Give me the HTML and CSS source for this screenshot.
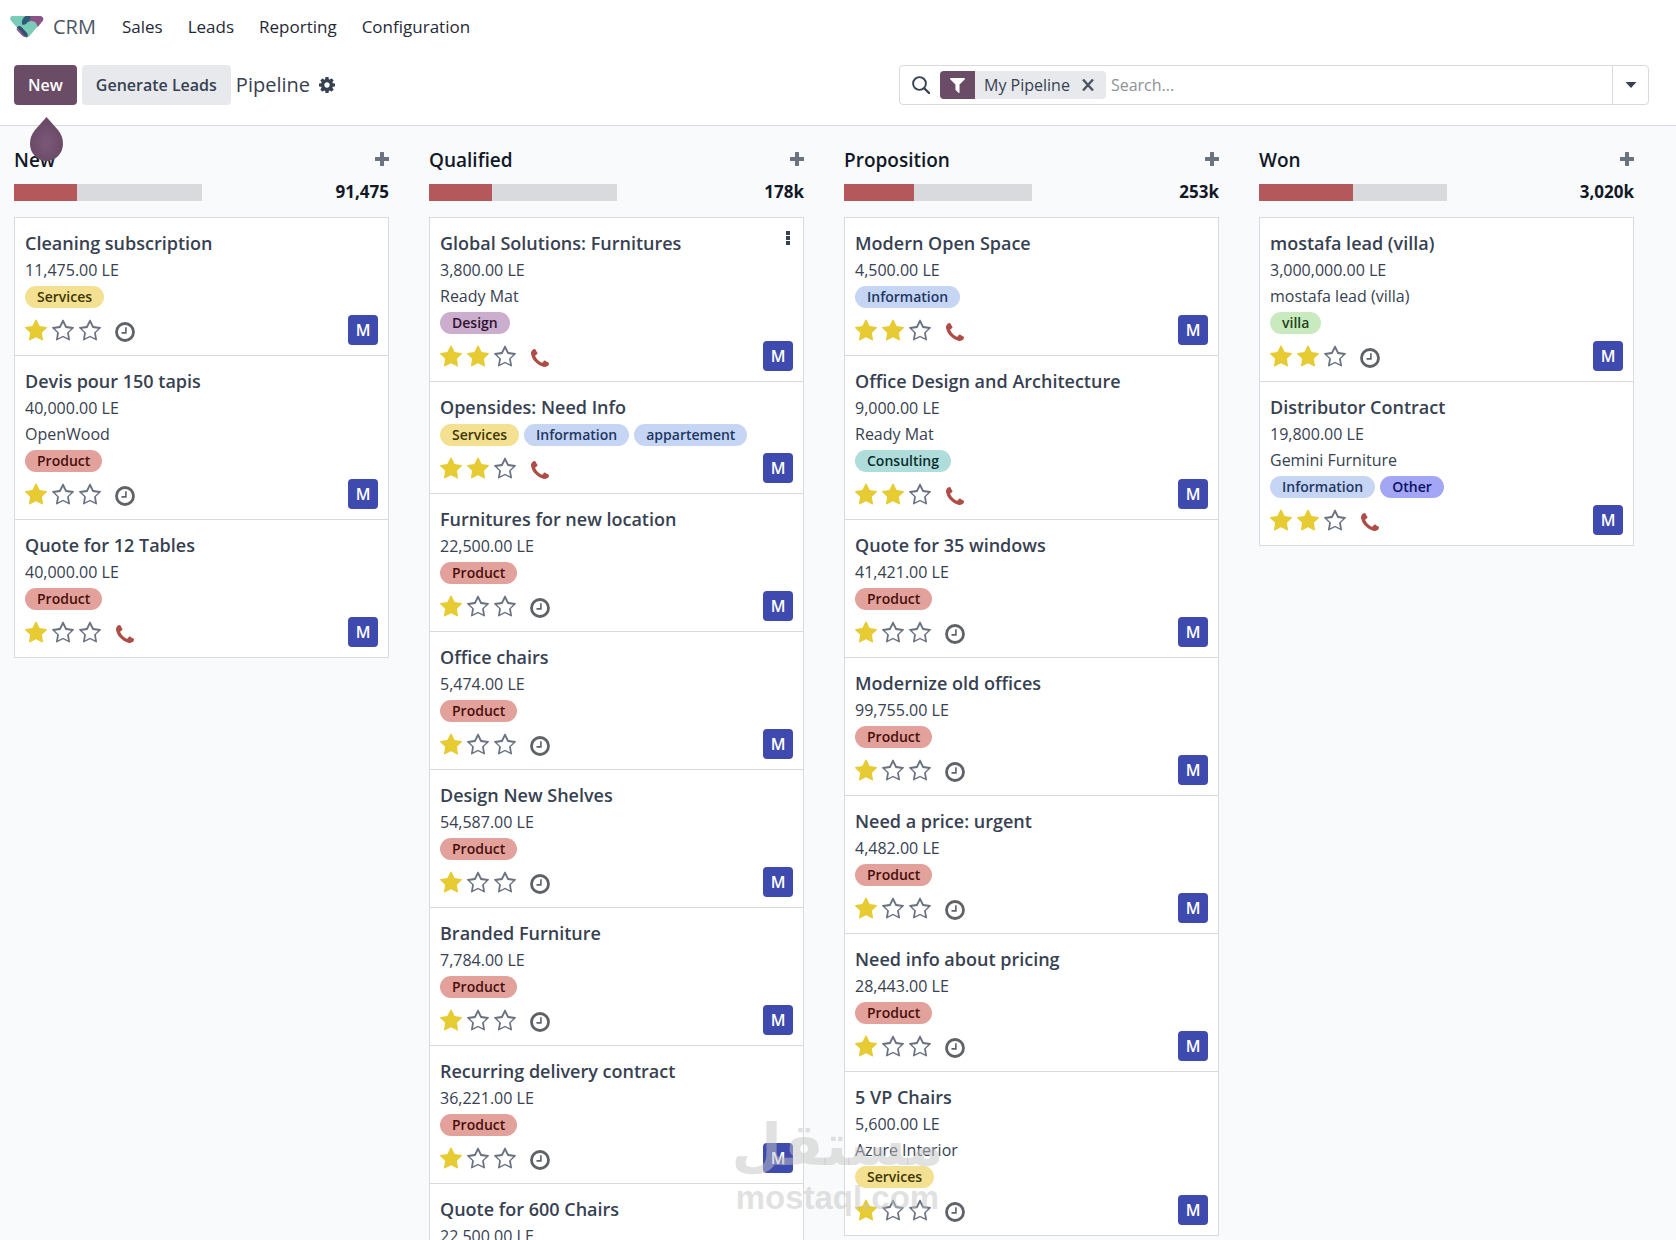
FILE: index.html
```html
<!DOCTYPE html>
<html lang="en">
<head>
<meta charset="utf-8">
<title>Pipeline</title>
<link rel="stylesheet" href="styles.css">
</head>
<body>
<svg class="sprite" aria-hidden="true">
  <symbol id="star" viewBox="0 0 1664 1600"><path d="M1664 615q0 22-26 48l-363 354 86 500q1 7 1 20 0 21-10.500 35.500t-30.500 14.500q-19 0-40-12l-449-236-449 236q-22 12-40 12-21 0-31.500-14.500t-10.500-35.500q0-6 2-20l86-500-364-354q-25-27-25-48 0-37 56-46l502-73 225-455q19-41 49-41t49 41l225 455 502 73q56 9 56 46z" fill="currentColor"/></symbol>
  <symbol id="star-o" viewBox="0 0 1664 1600"><path d="M1137 1004l306-297-422-62-189-382-189 382-422 62 306 297-73 421 378-199 377 199zm527-389q0 22-26 48l-363 354 86 500q1 7 1 20 0 50-41 50-19 0-40-12l-449-236-449 236q-22 12-40 12-21 0-31.500-14.500t-10.500-35.500q0-6 2-20l86-500-364-354q-25-27-25-48 0-37 56-46l502-73 225-455q19-41 49-41t49 41l225 455 502 73q56 9 56 46z" fill="currentColor"/></symbol>
  <symbol id="clock" viewBox="0 0 20 20"><circle cx="10" cy="10" r="8.500" fill="none" stroke="currentColor" stroke-width="2.800"/><path d="M10.900 5.200v5.700H6.500" fill="none" stroke="currentColor" stroke-width="1.600"/></symbol>
  <symbol id="phone" viewBox="192 128 1408 1408"><path d="M1600 1240q0 27-10 70.500t-21 68.500q-21 50-122 106-94 51-186 51-27 0-53-3.500t-57.500-12.500-47-14.500-55.500-20.500-49-18q-98-35-175-83-127-79-264-216t-216-264q-48-77-83-175-3-9-18-49t-20.500-55.500-14.500-47-12.500-57.500-3.500-53q0-92 51-186 56-101 106-122 25-11 68.500-21t70.500-10q14 0 21 3 18 6 53 76 11 19 30 54t35 63.500 31 53.500q3 4 17.500 25t21.500 35.500 7 28.500q0 20-28.500 50t-62 55-62 53-28.500 46q0 9 5 22.500t8.500 20.500 14 24 11.500 19q76 137 174 235t235 174q2 1 19 11.500t24 14 20.500 8.500 22.500 5q18 0 46-28.500t53-62 55-62 50-28.500q14 0 28.500 7t35.500 21.500 25 17.500q25 15 53.500 31t63.500 35 54 30q70 35 76 53 3 7 3 21z" fill="currentColor"/></symbol>
  <symbol id="plus" viewBox="0 0 14 14"><path d="M5.500 0h3q.5 0 .5.500V5h4.500q.5 0 .5.500v3q0 .5-.5.500H9v4.500q0 .5-.5.500h-3q-.5 0-.5-.5V9H.500Q0 9 0 8.500v-3Q0 5 .5 5H5V.5q0-.5.500-.5z" fill="currentColor"/></symbol>
</svg>

<header class="navbar">
  <a class="brand" href="#">
    <svg class="brand-logo" viewBox="0 0 34 22" aria-hidden="true">
      <path d="M2.500 0h28q3.500 1 2 4.500L20 19.500q-3 3-6 0L.8 4.500Q-1 0 2.500 0z" fill="#7accb9"/>
      <path d="M16 0h14.500q4 .8 2.500 4.500l-5.500 6.800Q27 5.500 21.500 5L14 7z" fill="#8b5486"/>
      <path d="M12 8.500Q11 3 15.500 0H20q1.500 1.500 0 3.500l-3.500 4Q14.500 9.500 12 8.500z" fill="#2c5b78"/>
      <path d="M7.500 12.300L7 11.500q2-2.500 4.500-.5l5.500 6q1.500 2 .5 4-2 .5-3.500-1z" fill="#34506e"/>
      <path d="M7 11.700q-.8 1.500 0 2.500l5 5.300q2 2.200 5.500 1.500-4-1-6-4.300z" fill="#8b5486"/>
    </svg>
    <span>CRM</span>
  </a>
  <nav class="menu">
    <a href="#">Sales</a>
    <a href="#">Leads</a>
    <a href="#">Reporting</a>
    <a href="#">Configuration</a>
  </nav>
</header>

<section class="control-panel">
  <div class="actions">
    <div class="new-wrap">
      <button class="btn btn-primary" type="button">New</button>
      <svg class="tour-pointer" viewBox="0 0 33 44" aria-hidden="true">
        <defs><radialGradient id="drop" cx="50%" cy="60%" r="50%"><stop offset="0" stop-color="#7b587a"/><stop offset="1" stop-color="#6a4a66"/></radialGradient></defs>
        <path d="M16.500 0L28 13q5 6 5 14a16.500 17 0 0 1-33 0q0-8 5-14z" fill="url(#drop)"/>
      </svg>
    </div>
    <button class="btn btn-secondary" type="button">Generate Leads</button>
    <h1 class="page-title">Pipeline</h1>
    <button class="icon-btn gear" type="button" aria-label="Actions">
      <svg viewBox="0 128 1536 1536" width="16" height="16"><path d="M1024 896q0-106-75-181t-181-75-181 75-75 181 75 181 181 75 181-75 75-181zm512-109v222q0 12-8 23t-20 13l-185 28q-19 54-39 91 35 50 107 138 10 12 10 25t-9 23q-27 37-99 108t-94 71q-12 0-26-9l-138-108q-44 23-91 38-16 136-29 186-7 28-36 28h-222q-14 0-24.500-8.500t-11.500-21.500l-28-184q-49-16-90-37l-141 107q-10 9-25 9-14 0-25-11-126-114-165-168-7-10-7-23 0-12 8-23 15-21 51-66.500t54-70.500q-27-50-41-99l-183-27q-13-2-21-12.500t-8-23.500v-222q0-12 8-23t19-13l186-28q14-46 39-92-40-57-107-138-10-12-10-24 0-10 9-23 26-36 98.500-107.500t94.500-71.500q13 0 26 10l138 107q44-23 91-38 16-136 29-186 7-28 36-28h222q14 0 24.500 8.500t11.500 21.500l28 184q49 16 90 37l142-107q9-9 24-9 13 0 25 10 129 119 165 170 7 8 7 22 0 12-8 23-15 21-51 66.500t-54 70.500q26 50 41 98l183 28q13 2 21 12.500t8 23.500z" fill="currentColor"/></svg>
    </button>
  </div>
  <div class="search">
    <svg class="search-icon" viewBox="0 0 18 18" aria-hidden="true"><circle cx="7.500" cy="7.500" r="6.400" fill="none" stroke="currentColor" stroke-width="1.900"/><path d="M12.200 12.200l4.800 4.800" stroke="currentColor" stroke-width="2.300" stroke-linecap="round"/></svg>
    <div class="facet">
      <span class="facet-icon"><svg viewBox="192 256 1408 1408" width="15" height="15" aria-hidden="true"><path d="M1595 295q17 41-14 70l-493 493v742q0 42-39 59-13 5-25 5-27 0-45-19l-256-256q-19-19-19-45v-486l-493-493q-31-29-14-70 17-39 59-39h1280q42 0 59 39z" fill="currentColor"/></svg></span>
      <span class="facet-label">My Pipeline</span>
      <button class="icon-btn facet-remove" type="button" aria-label="Remove filter"><svg viewBox="0 0 12 12" width="12" height="12"><path d="M1 .5l10 11M11 .5l-10 11" stroke="currentColor" stroke-width="2.400"/></svg></button>
    </div>
    <input class="search-input" type="text" placeholder="Search..." aria-label="Search">
    <button class="search-toggle" type="button" aria-label="Toggle search panel"><svg viewBox="0 0 12 6" width="12" height="6"><path d="M.5 0h11L6 6z" fill="currentColor"/></svg></button>
  </div>
</section>

<main class="board" id="board"></main>

<div class="watermark" aria-hidden="true"><span class="watermark-ar" lang="ar">مستقل</span><span class="watermark-en">mostaql.com</span></div>
<script src="board.js"></script>
</body>
</html>
```
FILE: styles.css
```css
* { box-sizing: border-box; }

body {
  margin: 0;
  height: 100vh;
  display: flex;
  flex-direction: column;
  position: relative;
  overflow: hidden;
  background: #fff;
  color: #374151;
  font: 16px/26px "Open Sans", "Noto Sans", sans-serif;
}

button, input { font: inherit; color: inherit; }
button { border: 0; padding: 0; background: none; cursor: pointer; }
a { color: inherit; text-decoration: none; }
h1, h2, h3, p { margin: 0; }
svg { display: block; }
.sprite { position: absolute; width: 0; height: 0; }

.navbar { display: flex; align-items: center; gap: 26px; height: 54px; padding: 0 10px; flex: none; }
.brand { display: flex; align-items: center; gap: 9px; font-size: 20px; color: #4b5563; }
.brand-logo { width: 34px; height: 22px; }
.menu { display: flex; gap: 25px; font-size: 17px; color: #1f2937; }

.control-panel {
  display: flex;
  align-items: flex-start;
  justify-content: space-between;
  height: 72px;
  padding: 11px 27px 0 14px;
  border-bottom: 1px solid #d8dadd;
  flex: none;
}
.actions { display: flex; align-items: center; gap: 5px; }
.btn { height: 40px; padding: 0 14px; border-radius: 4px; font-weight: 600; display: block; }
.btn-primary { background: #6a4c66; color: #fff; }
.btn-secondary { background: #e7e9ed; }
.new-wrap { position: relative; }
.tour-pointer { position: absolute; left: 16px; top: 52px; width: 33px; height: 44px; z-index: 2; }
.page-title { font-size: 20px; font-weight: 400; }
.icon-btn { display: flex; align-items: center; justify-content: center; }
.gear { margin-left: 4px; color: #374151; }

.search { display: flex; align-items: center; width: 750px; height: 40px; border: 1px solid #d8dadd; border-radius: 4px; }
.search-icon { width: 18px; height: 18px; margin: 0 10px 0 12px; flex: none; }
.facet { display: flex; align-items: center; height: 28px; padding-right: 12px; border-radius: 4px; background: #e7e9ed; overflow: hidden; flex: none; }
.facet-icon { display: flex; align-items: center; justify-content: center; width: 35px; height: 28px; background: #6a4c66; color: #fff; }
.facet-label { padding: 0 12px 0 9px; }
.facet-remove { color: #4b5563; }
.search-input { flex: 1; min-width: 0; height: 38px; border: 0; padding: 0 5px; background: none; outline: 0; }
.search-input::placeholder { color: #8d9199; opacity: 1; }
.search-toggle { display: flex; align-items: center; justify-content: center; width: 36px; height: 38px; border-left: 1px solid #d8dadd; }

.board {
  flex: 1;
  min-height: 0;
  overflow: hidden;
  display: grid;
  grid-template-columns: repeat(4, minmax(0, 1fr));
  gap: 40px;
  padding: 20px 42px 0 14px;
  background: #f9fafb;
}
.column-head { display: flex; justify-content: space-between; align-items: center; height: 28px; }
.column-title { font-size: 19px; font-weight: 600; color: #111827; }
.add { color: #6b7280; padding-bottom: 3px; }
.progress-row { display: flex; justify-content: space-between; align-items: center; height: 26px; margin: 5px 0 12px; }
.progress { width: 50%; height: 17px; background: #d8dadd; }
.progress-fill { height: 100%; background: #b4585b; }
.total { font-size: 17px; font-weight: 700; color: #111827; }

.cards { border: 1px solid #d8dadd; border-bottom: 0; background: #fff; }
.card { position: relative; padding: 11px 10px 10px; border-bottom: 1px solid #d8dadd; }
.card-title { font-size: 18px; line-height: 28px; font-weight: 600; }
.tags { display: flex; gap: 5px; margin: 3px 0 7px; }
.tag { height: 22px; padding: 0 12px; border-radius: 11px; font-size: 14px; line-height: 22px; font-weight: 600; }
.tag-services { background: #f3e191; color: #3d3605; }
.tag-product { background: #e3a19b; color: #470f0a; }
.tag-information, .tag-appartement { background: #c5d5f3; color: #1d3763; }
.tag-design { background: #cbadcd; color: #2d1430; }
.tag-consulting { background: #aedddb; color: #0c2e2c; }
.tag-villa { background: #c9eabf; color: #21441a; }
.tag-other { background: #a2a6f5; color: #0c1163; }
.card-foot { display: flex; align-items: center; height: 30px; }
.stars { display: flex; gap: 5px; margin-right: 14px; }
.star { color: #6b7280; }
.star.on { color: #e6cb33; }
.star svg { width: 22px; height: 22px; }
.activity { width: 20px; padding-top: 3px; color: #5f6368; }
.activity svg { width: 20px; height: 20px; }
.activity.call { color: #ad4d45; }
.activity.call svg { width: 18px; height: 18px; margin: 0 auto; }
.avatar { margin-left: auto; width: 30px; height: 30px; border-radius: 4px; background: #3f4aaf; color: #fff; font-weight: 600; line-height: 30px; text-align: center; }
.more { position: absolute; top: 13px; right: 13px; color: #374151; }

.watermark {
  position: absolute;
  left: 44%;
  bottom: 22px;
  width: 200px;
  display: flex;
  flex-direction: column;
  align-items: center;
  color: rgba(196, 196, 196, .5);
  font-weight: 700;
  pointer-events: none;
}
.watermark-ar { font: 700 58px/66px "DejaVu Sans", sans-serif; }
.watermark-en { font: 700 33px/40px "Liberation Sans", sans-serif; }
```
FILE: board.js
```js
const columns = [
  { name: "New", total: "91,475", progress: 33.4, cards: [
    ["Cleaning subscription", "11,475.00 LE", "", ["Services"], 1, "clock"],
    ["Devis pour 150 tapis", "40,000.00 LE", "OpenWood", ["Product"], 1, "clock"],
    ["Quote for 12 Tables", "40,000.00 LE", "", ["Product"], 1, "phone"],
  ]},
  { name: "Qualified", total: "178k", progress: 33.4, cards: [
    ["Global Solutions: Furnitures", "3,800.00 LE", "Ready Mat", ["Design"], 2, "phone", true],
    ["Opensides: Need Info", "", "", ["Services", "Information", "appartement"], 2, "phone"],
    ["Furnitures for new location", "22,500.00 LE", "", ["Product"], 1, "clock"],
    ["Office chairs", "5,474.00 LE", "", ["Product"], 1, "clock"],
    ["Design New Shelves", "54,587.00 LE", "", ["Product"], 1, "clock"],
    ["Branded Furniture", "7,784.00 LE", "", ["Product"], 1, "clock"],
    ["Recurring delivery contract", "36,221.00 LE", "", ["Product"], 1, "clock"],
    ["Quote for 600 Chairs", "22,500.00 LE", "", ["Product"], 1, "clock"],
  ]},
  { name: "Proposition", total: "253k", progress: 37.5, cards: [
    ["Modern Open Space", "4,500.00 LE", "", ["Information"], 2, "phone"],
    ["Office Design and Architecture", "9,000.00 LE", "Ready Mat", ["Consulting"], 2, "phone"],
    ["Quote for 35 windows", "41,421.00 LE", "", ["Product"], 1, "clock"],
    ["Modernize old offices", "99,755.00 LE", "", ["Product"], 1, "clock"],
    ["Need a price: urgent", "4,482.00 LE", "", ["Product"], 1, "clock"],
    ["Need info about pricing", "28,443.00 LE", "", ["Product"], 1, "clock"],
    ["5 VP Chairs", "5,600.00 LE", "Azure Interior", ["Services"], 1, "clock"],
  ]},
  { name: "Won", total: "3,020k", progress: 50, cards: [
    ["mostafa lead (villa)", "3,000,000.00 LE", "mostafa lead (villa)", ["villa"], 2, "clock"],
    ["Distributor Contract", "19,800.00 LE", "Gemini Furniture", ["Information", "Other"], 2, "phone"],
  ]},
];

const icon = (id) => `<svg aria-hidden="true"><use href="#${id}"/></svg>`;

function cardHtml([title, amount, partner, tags, stars, activity, menu]) {
  const starButtons = [1, 2, 3].map((n) =>
    `<button type="button" class="star${n <= stars ? " on" : ""}" aria-label="Priority ${n}">${icon(n <= stars ? "star" : "star-o")}</button>`).join("");
  return `<article class="card">
    <h3 class="card-title">${title}</h3>
    ${amount ? `<p>${amount}</p>` : ""}
    ${partner ? `<p>${partner}</p>` : ""}
    <div class="tags">${tags.map((t) => `<span class="tag tag-${t.toLowerCase()}">${t}</span>`).join("")}</div>
    <div class="card-foot">
      <div class="stars">${starButtons}</div>
      <button type="button" class="activity${activity === "phone" ? " call" : ""}" aria-label="Activities">${icon(activity)}</button>
      <span class="avatar">M</span>
    </div>
    ${menu ? `<button type="button" class="more" aria-label="Card menu"><svg viewBox="0 0 4 14" width="4" height="14"><path d="M0 0h4v4H0zM0 5h4v4H0zM0 10h4v4H0z" fill="currentColor"/></svg></button>` : ""}
  </article>`;
}

document.getElementById("board").innerHTML = columns.map((c) => `<section class="column">
  <div class="column-head"><h2 class="column-title">${c.name}</h2>
    <button type="button" class="add" aria-label="Add to ${c.name}"><svg width="14" height="14"><use href="#plus"/></svg></button></div>
  <div class="progress-row"><div class="progress"><div class="progress-fill" style="width:${c.progress}%"></div></div><span class="total">${c.total}</span></div>
  <div class="cards">${c.cards.map(cardHtml).join("")}</div>
</section>`).join("");
```
